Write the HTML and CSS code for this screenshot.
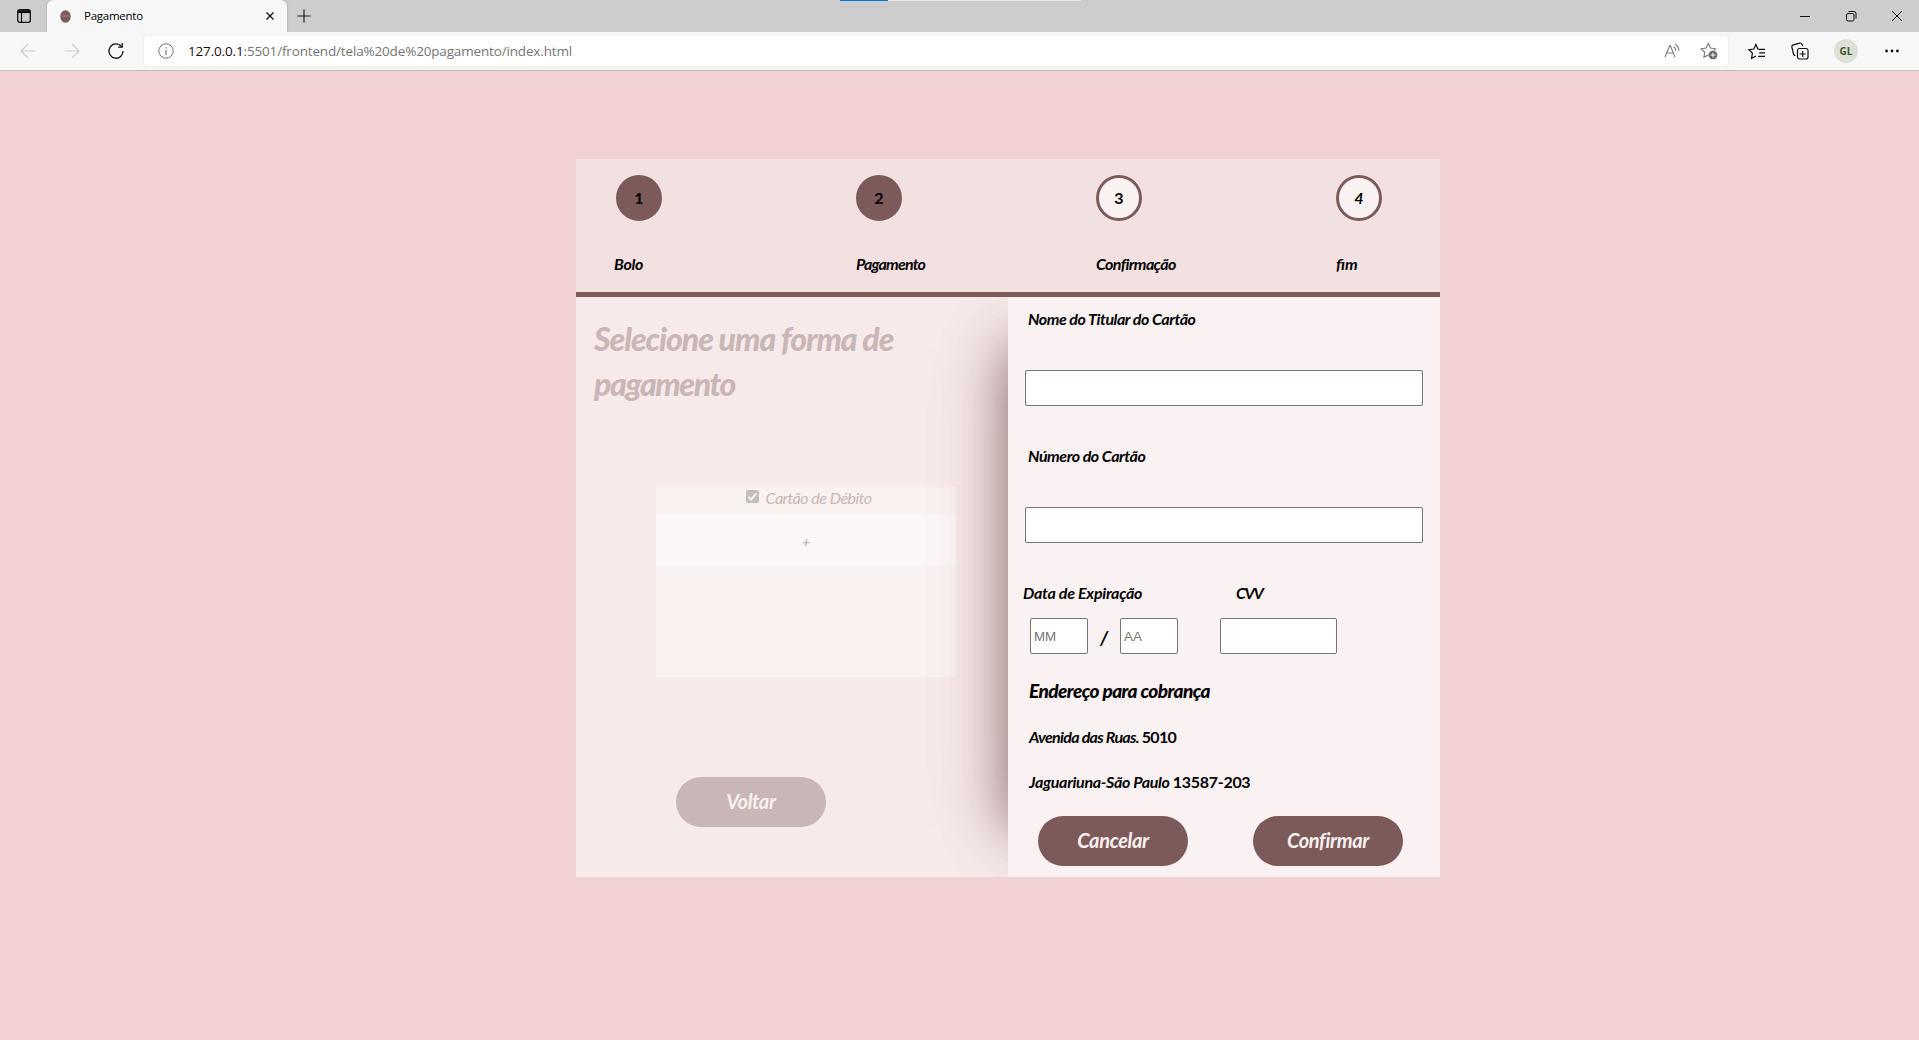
FILE: index.html
```html
<!DOCTYPE html>
<html lang="pt-BR">
<head>
<meta charset="utf-8">
<title>Pagamento</title>
<link rel="stylesheet" href="styles.css">
</head>
<body>
<header class="browser">
  <div class="tabbar">
    <span class="progress"></span>
    <div class="tab-actions">
      <svg width="14" height="14" viewBox="0 0 14 14" fill="none" stroke="#111"><rect x=".7" y=".7" width="12.6" height="12.6" rx="2" stroke-width="1.3"/><path d="M1 2.6h12" stroke-width="3"/><path d="M4.5 4v9" stroke-width="1.2"/></svg>
    </div>
    <div class="tab">
      <svg class="favicon" width="11" height="13" viewBox="0 0 11 13"><ellipse cx="5.5" cy="6.5" rx="5.2" ry="6.2" fill="#7d5a5a"/><path d="M2.500 6h6" stroke="#b49a9a" stroke-width=".8"/></svg>
      <span class="tab-title">Pagamento</span>
      <svg width="10" height="10" viewBox="0 0 10 10" stroke="#111" stroke-width="1.3"><path d="M1.5 1.5l7 7M8.5 1.5l-7 7"/></svg>
    </div>
    <svg class="new-tab" width="14" height="14" viewBox="0 0 14 14" stroke="#222" stroke-width="1.2"><path d="M7 .5v13M.5 7h13"/></svg>
    <div class="window-actions">
      <svg width="12" height="12" viewBox="0 0 12 12" stroke="#111" fill="none"><path d="M1 6.5h10"/></svg>
      <svg width="12" height="12" viewBox="0 0 12 12" stroke="#111" fill="none"><rect x="1.5" y="3.5" width="7.5" height="7.5" rx="1.5"/><path d="M3.5 1.5H9a2 2 0 0 1 2 2v5"/></svg>
      <svg width="12" height="12" viewBox="0 0 12 12" stroke="#111" fill="none"><path d="M1 1l10 10M11 1L1 11"/></svg>
    </div>
  </div>
  <div class="toolbar">
    <svg class="nav-back" width="16" height="16" viewBox="0 0 16 16" stroke="#ccc" stroke-width="1.1" fill="none"><path d="M15.5 8H1M8 1L1 8l7 7"/></svg>
    <svg class="nav-next" width="16" height="16" viewBox="0 0 16 16" stroke="#ccc" stroke-width="1.1" fill="none"><path d="M.5 8H15M8 1l7 7-7 7"/></svg>
    <svg class="nav-reload" width="16" height="18" viewBox="0 0 16 18" stroke="#111" stroke-width="1.3" fill="none"><path d="M10.5 2.3A7 7.2 0 1 0 15 9M10.2 5.2h4V1"/><path d="M14 5.2A7 7.2 0 0 0 10.5 2.3"/></svg>
    <div class="address">
      <svg width="16" height="16" viewBox="0 0 16 16" stroke="#777" fill="none"><circle cx="8" cy="8" r="7.2"/><path d="M8 7v5M8 4.2v1.4" stroke-width="1.2"/></svg>
      <span class="url"><b>127.0.0.1</b>:5501/frontend/tela%20de%20pagamento/index.html</span>
      <svg width="17" height="16" viewBox="0 0 17 16" stroke="#777" fill="none"><path d="M1 14L5.8 2.5h.5L11 14M2.8 10h6.5M9.7 3.5q2 1.7 2 4.2M11.3 1.2q3.7 2.3 3.6 6.5" stroke-width="1.1"/></svg>
      <svg class="add-fav" width="18" height="18" viewBox="0 0 18 18" fill="none"><path d="M8.3 1.5l2.2 4.6 5 .7-3.6 3.5.8 5-4.4-2.4L3.9 15.300l.8-5L1.100 6.800l5-.7z" stroke="#777" stroke-width="1.1"/><circle cx="13" cy="13" r="4.6" fill="#666" stroke="#fff" stroke-width=".5"/><path d="M13 10.500v5M10.500 13h5" stroke="#fff"/></svg>
    </div>
    <svg class="favorites" width="18" height="17" viewBox="0 0 18 17" stroke="#111" stroke-width="1.2" fill="none"><path d="M14 6.300l-4.200-.3-1.900-4.500L5.800 6 .9 6.700l3.500 3.500-.8 5.300 4.300-2.400M10.200 6.300H17M11.200 9.800H17M10.200 13.300H17"/></svg>
    <svg class="collections" width="18" height="18" viewBox="0 0 18 18" stroke="#111" stroke-width="1.2" fill="none"><rect x="6.500" y="6.500" width="10.500" height="10.500" rx="2"/><path d="M11.700 9v6M8.700 12h6M4.500 13.500c-1 0-1.800-.6-2-1.500L.9 5.200c-.2-1 .3-2 1.300-2.300l6.500-1.800c1-.3 2 .3 2.400 1.300l.5 1.800"/></svg>
    <span class="avatar">GL</span>
    <svg class="more" width="14" height="4" viewBox="0 0 14 4" fill="#111"><circle cx="1.600" cy="2" r="1.400"/><circle cx="7" cy="2" r="1.400"/><circle cx="12.400" cy="2" r="1.400"/></svg>
  </div>
</header>

<main class="page">
  <section class="card">
    <ol class="steps">
      <li class="step done"><span class="number">1</span><span class="label bolo">Bolo</span></li>
      <li class="step done"><span class="number">2</span><span class="label pagamento">Pagamento</span></li>
      <li class="step"><span class="number">3</span><span class="label confirmacao">Confirmação</span></li>
      <li class="step"><span class="number last">4</span><span class="label fim">fim</span></li>
    </ol>
    <div class="columns">
      <div class="methods">
        <h1>Selecione uma forma de <span class="second">pagamento</span></h1>
        <div class="method-list">
          <label class="method"><svg class="check" width="13" height="13" viewBox="0 0 13 13"><rect width="13" height="13" rx="2" fill="#767676"/><path d="M2.500 6.800l2.800 2.800 5-6.500" stroke="#fff" stroke-width="2" fill="none"/></svg><span class="method-name">Cartão de Débito</span></label>
          <div class="add">+</div>
        </div>
        <button class="btn back">Voltar</button>
      </div>
      <form class="payment">
        <label class="field-label holder">Nome do Titular do Cartão</label>
        <input class="wide" type="text">
        <label class="field-label card-number">Número do Cartão</label>
        <input class="wide" type="text">
        <div class="pair-labels"><label class="expiry">Data de Expiração</label><label class="cvv">CVV</label></div>
        <div class="pair-inputs"><input class="short" type="text" placeholder="MM"><span class="slash">/</span><input class="short" type="text" placeholder="AA"><input class="code" type="text"></div>
        <h2>Endereço para cobrança</h2>
        <p class="street">Avenida das Ruas. <span class="digits">5010</span></p>
        <p class="city">Jaguariuna-São Paulo <span class="digits">13587-203</span></p>
        <div class="actions"><button class="btn cancel" type="button">Cancelar</button><button class="btn confirm" type="button">Confirmar</button></div>
      </form>
    </div>
  </section>
</main>
</body>
</html>
```
FILE: styles.css
```css
* { box-sizing: border-box; }
body { margin: 0; height: 1040px; overflow: hidden; background: #f1d1d3; font: 12px "Open Sans", "Noto Sans", sans-serif; }
svg { display: block; flex: none; }

.browser { height: 71px; border-bottom: 1px solid #bfbfbf; background: #f7f7f7; }
.tabbar { position: relative; display: flex; align-items: center; height: 32px; background: #cdcdcd; }
.progress { position: absolute; left: 840px; top: 0; width: 241px; height: 1px; background: linear-gradient(90deg, #0078d7 48px, #e6e6e6 48px); }
.tab-actions { width: 47px; padding-left: 17px; }
.tab { display: flex; align-items: center; width: 240px; height: 32px; padding: 0 12px 0 13px; border-radius: 6px 6px 0 0; background: #f7f7f7; box-shadow: 0 0 2px #999; clip-path: inset(0 -3px 0 -3px); }
.tab-title { flex: 1; margin: -1px 0 0 13px; font-size: 11.5px; letter-spacing: -.25px; }
.new-tab { margin-left: 10px; }
.window-actions { display: flex; gap: 34px; margin-left: auto; padding-right: 16px; }
.toolbar { display: flex; align-items: center; height: 38px; padding-left: 20px; }
.nav-next { margin-left: 28px; }
.nav-reload { margin-left: 28px; }
.address { display: flex; align-items: center; width: 1584px; height: 30px; margin-left: 20px; padding: 0 10px 0 14px; border-radius: 4px; background: #fff; box-shadow: 0 0 3px #e2e2e2; }
.url { flex: 1; margin-left: 14px; color: #757575; font-size: 13.5px; letter-spacing: -.16px; }
.url b { color: #111; font-weight: 400; }
.add-fav { margin-left: 19px; }
.favorites { margin-left: 20px; }
.collections { margin-left: 25px; }
.avatar { width: 24px; height: 24px; margin-left: 25px; border-radius: 50%; background: #dce0d6; color: #44542f; font: 700 10px/24px "Open Sans", sans-serif; text-align: center; }
.more { margin-left: 27px; }

.page { display: flex; justify-content: center; padding: 88px 0 0 97px; font-family: "Lato", sans-serif; font-style: italic; font-size: 16px; font-weight: 700; color: #000; }
.card { width: 864px; height: 718px; background: #f3e1e1; }
.steps { display: flex; gap: 194px; height: 138px; margin: 0; padding: 16px 0 0 40px; border-bottom: 5px solid #7d5a5a; list-style: none; }
.step { width: 46px; white-space: nowrap; }
.number { display: block; width: 46px; height: 46px; border: 3px solid #7d5a5a; border-radius: 50%; background: #faf2f2; font-style: normal; line-height: 40px; text-align: center; }
.done .number { background: #7d5a5a; }
.number.last { font-style: italic; }
.label { display: block; margin-top: 33px; line-height: 20px; }
.bolo { margin-left: -2px; letter-spacing: -.3px; }
.pagamento { letter-spacing: -.8px; }
.confirmacao { letter-spacing: -.6px; }
.columns { display: flex; height: 580px; overflow: hidden; }
.methods { width: 432px; padding-top: 19px; background: #f7eaea; }
h1 { margin: 0 0 0 18px; color: #c9b7b7; font-size: 32px; font-weight: 900; line-height: 45px; letter-spacing: -1.05px; white-space: nowrap; }
.second { display: block; letter-spacing: -1.4px; }
.method-list { width: 300px; height: 190px; margin: 81px 0 0 80px; background: #faf1f1; color: #c9b7b7; }
.method { display: flex; justify-content: center; gap: 7px; height: 28px; padding: 3px 0 0 5px; font-weight: 400; line-height: 15px; letter-spacing: -.5px; white-space: nowrap; }
.check { opacity: .4; }
.add { height: 50px; background: #fcf6f6; font-size: 14px; line-height: 54px; text-align: center; }
.btn { width: 150px; height: 50px; padding: 0; border: 0; border-radius: 25px; background: #7d5a5a; color: #faf2f2; font: inherit; font-size: 20px; line-height: 48px; letter-spacing: -.35px; padding-bottom: 2px; }
.back { display: block; margin: 100px 0 0 100px; background: #c9b7b7; }
.payment { position: relative; width: 432px; padding-top: 12px; background: #faf2f2; box-shadow: -50px 0 54px -50px rgba(125, 90, 90, .88), -50px 0 80px -50px rgba(125, 90, 90, .15); }
.field-label { display: block; height: 61px; padding-left: 20px; line-height: 20px; letter-spacing: -.45px; white-space: nowrap; }
input { height: 36px; padding: 1px 3px; border: 1px solid #767676; border-radius: 2px; background: #fff; font: 13.333px "Liberation Sans", sans-serif; }
.wide { display: block; width: 398px; margin: 0 0 40px 17px; }
.pair-labels { display: flex; padding-left: 15px; line-height: 20px; letter-spacing: -.25px; white-space: nowrap; }
.expiry { width: 213px; }
.cvv { letter-spacing: -1.4px; }
.pair-inputs { display: flex; margin-top: 15px; padding-left: 22px; }
.short { width: 58px; }
.slash { width: 32px; padding-top: 1px; font-size: 19px; line-height: 38px; text-align: center; }
.code { width: 117px; margin-left: 42px; }
h2 { margin: 22px 0 0 21px; font-size: 19px; font-weight: 900; line-height: 24px; letter-spacing: -.55px; white-space: nowrap; }
.payment p { margin: 0 0 0 21px; line-height: 20px; white-space: nowrap; }
.payment .street { margin-top: 24px; letter-spacing: -.7px; }
.payment .city { margin-top: 25px; letter-spacing: -.3px; }
.digits { font-style: normal; }
.actions { display: flex; gap: 65px; margin: 24px 0 0 30px; }
```
